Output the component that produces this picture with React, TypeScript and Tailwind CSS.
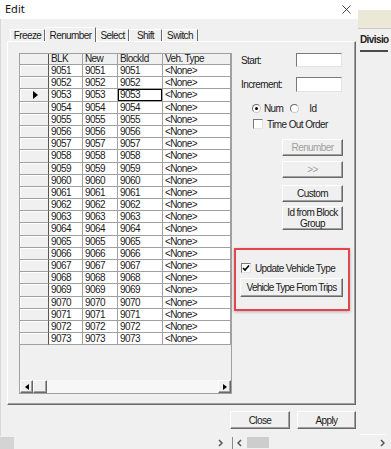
import React from "react";

const ROWS = Array.from({ length: 23 }, (_, i) => String(9051 + i));
const SELECTED = "9053";

const raised =
  "border border-t-white border-l-white border-r-[#696969] border-b-[#696969] shadow-[inset_-1px_-1px_0_#a0a0a0] bg-[#f0f0f0]";
const sunken =
  "border border-t-[#7a7a7a] border-l-[#7a7a7a] border-r-[#e3e3e3] border-b-[#e3e3e3] bg-white";

function Button({
  children,
  disabled,
  className = "",
}: {
  children: React.ReactNode;
  disabled?: boolean;
  className?: string;
}) {
  return (
    <div
      className={`${raised} flex items-center justify-center text-center leading-[11px] ${
        disabled ? "text-[#a0a0a0]" : "text-[#1a1a1a]"
      } ${className}`}
    >
      {children}
    </div>
  );
}

function CheckBox({ checked }: { checked?: boolean }) {
  return (
    <div className={`${sunken} w-[10px] h-[10px] flex items-center justify-center shrink-0`}>
      {checked && (
        <svg width="8" height="8" viewBox="0 0 8 8">
          <path d="M1 4 L3 6 L7 1.5" fill="none" stroke="#000" strokeWidth="1.6" />
        </svg>
      )}
    </div>
  );
}

function Radio({ checked }: { checked?: boolean }) {
  return (
    <div className="w-[9px] h-[9px] rounded-full border border-t-[#6a6a6a] border-l-[#6a6a6a] border-r-[#c8c8c8] border-b-[#c8c8c8] bg-white flex items-center justify-center shrink-0">
      {checked && <div className="w-[3px] h-[3px] rounded-full bg-black" />}
    </div>
  );
}

function Chevron({ dir }: { dir: "l" | "r" }) {
  return (
    <svg width="5" height="8" viewBox="0 0 5 8" className="shrink-0">
      <path
        d={dir === "r" ? "M1 1 L4 4 L1 7" : "M4 1 L1 4 L4 7"}
        fill="none"
        stroke="#555"
        strokeWidth="1.5"
      />
    </svg>
  );
}

function Tab({ label, width, active }: { label: string; width: string; active?: boolean }) {
  return (
    <div
      className={`${width} ${
        active ? "h-[15px] relative z-10 bg-[#f0f0f0]" : "h-[12px] mb-px"
      } flex items-center justify-center border-t border-l border-r border-t-white border-l-white border-r-[#696969]`}
    >
      {label}
    </div>
  );
}

function Grid() {
  const cols = "grid grid-cols-[29px_34px_35px_45px_68px]";
  return (
    <div className="w-[213px] h-[341px] border border-[#a0a0a0] bg-[#f0f0f0] flex flex-col shrink-0">
      {/* header */}
      <div className={`${cols} h-[11px] leading-[10px]`}>
        <div className="border-r border-b border-r-[#555] border-b-[#a0a0a0]" />
        {["BLK", "New", "BlockId", "Veh. Type"].map((h) => (
          <div key={h} className="border-r border-b border-[#a0a0a0] pl-[2px]">
            {h}
          </div>
        ))}
      </div>
      {ROWS.map((n) => (
        <div key={n} className={`${cols} h-[12.2px] leading-[11px]`}>
          <div className="border-r border-b border-r-[#555] border-b-[#a0a0a0] bg-[#f0f0f0] shadow-[inset_1px_1px_0_#fff] flex items-center justify-center">
            {n === SELECTED && (
              <svg width="5" height="8" viewBox="0 0 5 8" className="ml-[2px]">
                <path d="M0 0 L5 4 L0 8 Z" fill="#000" />
              </svg>
            )}
          </div>
          <div className="border-r border-b border-[#a0a0a0] bg-white pl-[2px]">{n}</div>
          <div className="border-r border-b border-[#a0a0a0] bg-white pl-[2px]">{n}</div>
          <div
            className={`border-r border-b border-[#a0a0a0] bg-white pl-[2px] ${
              n === SELECTED ? "shadow-[inset_0_0_0_1px_#000]" : ""
            }`}
          >
            {n}
          </div>
          <div className="border-r border-b border-[#a0a0a0] bg-white pl-[2px]">&lt;None&gt;</div>
        </div>
      ))}
      <div className="flex-1" />
      {/* horizontal scrollbar */}
      <div className="h-[13px] flex bg-[#f7f7f7]">
        <div className={`${raised} w-[13px] flex items-center justify-center`}>
          <svg width="4" height="6" viewBox="0 0 4 6">
            <path d="M4 0 L0 3 L4 6 Z" fill="#000" />
          </svg>
        </div>
        <div className={`${raised} w-[14px]`} />
        <div className="flex-1" />
        <div className={`${raised} w-[13px] flex items-center justify-center`}>
          <svg width="4" height="6" viewBox="0 0 4 6">
            <path d="M0 0 L4 3 L0 6 Z" fill="#000" />
          </svg>
        </div>
      </div>
    </div>
  );
}

function RightColumn() {
  return (
    <div className="w-[116px] ml-[2px] flex flex-col">
      <div className="h-[14px] flex items-center">
        <span className="ml-[7px] w-[55px]">Start:</span>
        <div className={`${sunken} w-[46px] h-[14px]`} />
      </div>
      <div className="h-[15px] mt-[10px] flex items-center">
        <span className="ml-[7px] w-[55px]">Increment:</span>
        <div className={`${sunken} w-[46px] h-[15px]`} />
      </div>
      <div className="h-[9px] mt-[12px] flex items-center">
        <div className="ml-[18px]">
          <Radio checked />
        </div>
        <span className="ml-[3px]">Num</span>
        <div className="ml-[7px]">
          <Radio />
        </div>
        <span className="ml-[10px]">Id</span>
      </div>
      <div className="h-[10px] mt-[6px] flex items-center">
        <div className="ml-[19px]">
          <CheckBox />
        </div>
        <span className="ml-[4px]">Time Out Order</span>
      </div>
      <Button disabled className="ml-[48px] mt-[10px] w-[61px] h-[17px]">
        Renumber
      </Button>
      <Button disabled className="ml-[48px] mt-[5px] w-[61px] h-[17px]">
        &gt;&gt;
      </Button>
      <Button className="ml-[48px] mt-[7px] w-[61px] h-[17px]">Custom</Button>
      <Button className="ml-[48px] mt-[4px] w-[61px] h-[24px]">
        Id from Block
        <br />
        Group
      </Button>
      {/* highlighted area */}
      <div className="mt-[18px] w-[116px] h-[63px] border-2 border-[#e5444c] shadow-[0_1px_3px_rgba(0,0,0,0.25)] flex flex-col pt-[13px]">
        <div className="h-[10px] flex items-center ml-[5px]">
          <CheckBox checked />
          <span className="ml-[4px]">Update Vehicle Type</span>
        </div>
        <Button className="ml-[4px] mt-[5px] w-[103px] h-[19px] tracking-[-0.75px]">
          Vehicle Type From Trips
        </Button>
      </div>
    </div>
  );
}

export default function App() {
  return (
    <div className="w-[391px] h-[449px] overflow-hidden bg-[#f0f0f0] font-['Liberation_Sans',Arial,sans-serif] text-[10px] tracking-[-0.6px] text-[#1a1a1a] flex flex-col">
      <div className="flex h-[436px]">
        {/* Edit dialog */}
        <div className="w-[358px] flex flex-col">
          <div className="h-[19px] bg-white flex items-center justify-between pl-[5px] pr-[7px]">
            <span className="font-['Noto_Sans',sans-serif] text-[11px] tracking-normal text-[#111]">Edit</span>
            <svg width="9" height="9" viewBox="0 0 9 9">
              <path d="M0.5 0.5 L8.5 8.5 M8.5 0.5 L0.5 8.5" stroke="#333" strokeWidth="0.9" />
            </svg>
          </div>
          <div className="flex-1 flex flex-col pl-[6px] pt-[8px] border-l border-[#d8d8d8]">
            <div className="flex items-end ml-[3px] -mb-px">
              <Tab label="Freeze" width="w-[35px]" />
              <Tab label="Renumber" width="w-[51px]" active />
              <Tab label="Select" width="w-[33px]" />
              <Tab label="Shift" width="w-[33px]" />
              <Tab label="Switch" width="w-[36px]" />
            </div>
            <div className="w-[349px] h-[364px] border border-t-white border-l-white border-r-[#696969] border-b-[#696969] shadow-[inset_-1px_-1px_0_#a0a0a0] flex pt-[11px] pl-[11px]">
              <Grid />
              <RightColumn />
            </div>
            <div className="w-[349px] flex justify-end gap-[7px] mt-[6px]">
              <Button className="w-[60px] h-[18px]">Close</Button>
              <Button className="w-[59px] h-[18px]">Apply</Button>
            </div>
          </div>
        </div>
        {/* window behind */}
        <div className="flex-1 flex flex-col">
          <div className="h-[10px] bg-white" />
          <div className="h-[18px] bg-[#ebe8d8]" />
          <div className="h-px bg-[#c8c8c8]" />
          <div className="mt-[5px] ml-[2px] font-bold text-[#222] leading-[12px]">Divisio</div>
          <div className="mt-[4px] ml-[2px] w-[28px] h-[2px] bg-[#4a4a4a]" />
          <div className="flex-1" />
          <div className="ml-[2px] w-[25px] h-px bg-white mb-[1px]" />
        </div>
      </div>
      {/* bottom scrollbar of the window behind */}
      <div className="h-[13px] flex items-center">
        <div className="w-[14px] h-[12px] bg-[#d4d4d4]" />
        <div className="w-[204px]" />
        <Chevron dir="r" />
        <div className="w-[9px]" />
        <div className="w-px h-[12px] bg-[#8a8a8a]" />
        <div className="w-[4px]" />
        <Chevron dir="l" />
        <div className="w-[5px]" />
        <div className="w-[22px] h-[11px] bg-[#cdcdcd]" />
        <div className="flex-1" />
        <Chevron dir="r" />
        <div className="w-[6px]" />
      </div>
    </div>
  );
}
